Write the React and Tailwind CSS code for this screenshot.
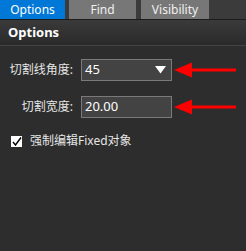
const RedArrow = () => (
  <svg width="64" height="16" viewBox="0 0 64 16" className="block">
    <polygon points="0,8 18,0.5 18,15.5" fill="#ff0000" />
    <rect x="16" y="6.5" width="46" height="3" fill="#ff0000" />
  </svg>
);

const Field = ({ value, dropdown }) => (
  <div className="flex h-[22px] w-[91px] items-center justify-between border border-[#7a7a7a] bg-[#434343] pl-[3px] pr-[5px] text-[13px] text-white">
    <span>{value}</span>
    {dropdown && (
      <svg width="11" height="8" viewBox="0 0 11 8" className="block">
        <polygon points="0,0 11,0 5.5,7.5" fill="#ffffff" />
      </svg>
    )}
  </div>
);

const Row = ({ label, value, dropdown }) => (
  <div className="flex items-center">
    <span className="w-[73px] text-right text-[12px] text-[#e6e6e6]">{label}</span>
    <div className="ml-[8px]">
      <Field value={value} dropdown={dropdown} />
    </div>
    <div className="ml-[2px]">
      <RedArrow />
    </div>
  </div>
);

export default function App() {
  return (
    <div
      className="h-[251px] w-[246px] overflow-hidden bg-[#2d2d2d]"
      style={{ fontFamily: '"Noto Sans", "Noto Sans CJK SC", sans-serif' }}
    >
      <div className="flex h-[19px] bg-[#3b3b3b] text-[12px] leading-[19px]">
        <div className="w-[65px] bg-[#0078d7] text-center text-white">Options</div>
        <div className="ml-[4px] w-[67px] bg-[#777777] text-center text-[#f0f0f0]">Find</div>
        <div className="ml-[5px] w-[68px] bg-[#777777] text-center text-[#f0f0f0]">Visibility</div>
      </div>
      <div className="h-px bg-[#1c1c1c]" />
      <div className="flex h-[25px] items-center bg-gradient-to-b from-[#3a3a3a] to-[#2a2a2a] px-[8px] text-[13px] font-bold text-white">
        Options
      </div>
      <div className="h-px bg-[#454545]" />
      <div className="flex flex-col pt-[13px]">
        <Row label="切割线角度:" value="45" dropdown />
        <div className="mt-[15px]">
          <Row label="切割宽度:" value="20.00" />
        </div>
        <div className="mt-[14px] flex items-center pl-[11px]">
          <div className="flex h-[11px] w-[11px] items-center justify-center bg-white">
            <svg width="10" height="9" viewBox="0 0 10 9" className="block">
              <path d="M1 5 L3.5 8 L9 0.5" stroke="#000" strokeWidth="1.4" fill="none" />
            </svg>
          </div>
          <span className="ml-[8px] text-[12px] text-[#e6e6e6]">强制编辑Fixed对象</span>
        </div>
      </div>
    </div>
  );
}
